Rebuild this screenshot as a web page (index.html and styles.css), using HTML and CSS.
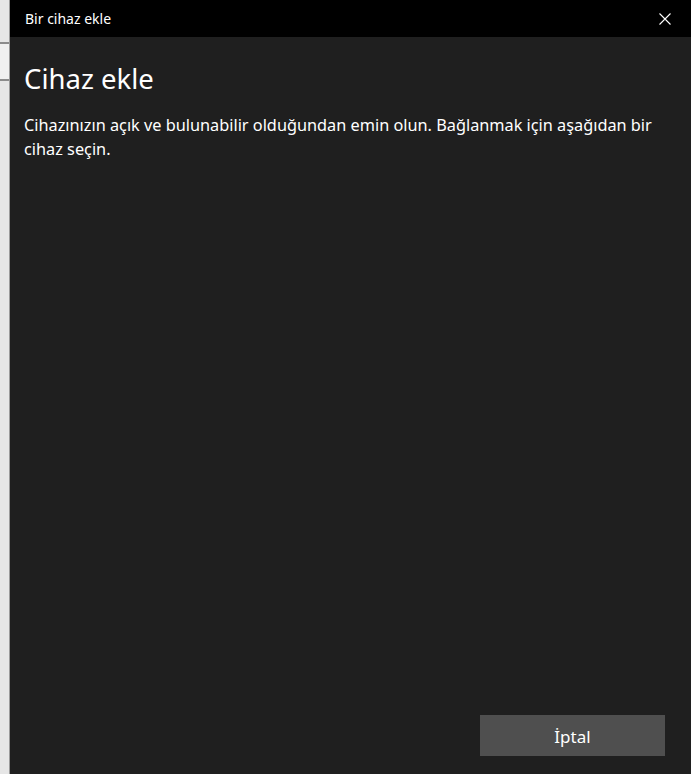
FILE: index.html
```html
<!DOCTYPE html>
<html lang="tr">
<head>
<meta charset="utf-8">
<link rel="stylesheet" href="styles.css">
</head>
<body>
<div class="screen">
  <div class="side">
    <div class="side-top"></div>
    <div class="side-line"></div>
    <div class="side-mid"></div>
    <div class="side-line"></div>
    <div class="side-rest"></div>
  </div>
  <div class="dialog">
    <div class="titlebar">
      <span class="title">Bir cihaz ekle</span>
      <span class="close">
        <svg width="12" height="12" viewBox="0 0 12 12"><path d="M0.5 0.5 L11.5 11.5 M11.5 0.5 L0.5 11.5" stroke="#fff" stroke-width="1.1" fill="none"/></svg>
      </span>
    </div>
    <div class="content">
      <h1 class="heading">Cihaz ekle</h1>
      <p class="desc">Cihazınızın açık ve bulunabilir olduğundan emin olun. Bağlanmak için aşağıdan bir cihaz seçin.</p>
      <div class="spacer"></div>
      <div class="actions">
        <button class="btn">İptal</button>
      </div>
    </div>
  </div>
</div>
</body>
</html>
```

FILE: styles.css
```css
html, body {
  margin: 0;
  padding: 0;
  height: 100%;
  background: #1f1f1f;
}
.screen {
  display: flex;
  height: 774px;
  width: 691px;
  overflow: hidden;
  font-family: "Noto Sans", "Open Sans", sans-serif;
}
.side {
  width: 9px;
  flex: none;
  display: flex;
  flex-direction: column;
  background: #e6e6e6;
  border-right: 1px solid #9a9a9a;
}
.side-top { height: 42px; background: #e6e6e6; }
.side-line { height: 2px; background: #8c8c8c; }
.side-mid { height: 35px; background: #f0f0f0; }
.side-rest { flex: 1; background: #e6e6e6; }
.dialog {
  flex: 1;
  display: flex;
  flex-direction: column;
  background: #1f1f1f;
}
.titlebar {
  height: 37px;
  background: #000;
  display: flex;
  align-items: center;
  justify-content: space-between;
  padding: 0 20px 0 15px;
}
.title {
  color: #fff;
  font-size: 14px;
}
.close {
  display: flex;
  width: 12px;
  height: 12px;
}
.content {
  flex: 1;
  display: flex;
  flex-direction: column;
  padding: 0 26px 18px 14px;
}
.heading {
  margin: 24px 0 0 0;
  font-weight: 400;
  font-size: 27.5px;
  color: #fff;
  line-height: 36px;
}
.desc {
  margin: 16px 0 0 0;
  font-size: 16.3px;
  line-height: 24px;
  color: #fff;
}
.spacer { flex: 1; }
.actions {
  display: flex;
  justify-content: flex-end;
}
.btn {
  width: 185px;
  height: 41px;
  background: #4f4f4f;
  border: none;
  color: #fff;
  font-family: inherit;
  font-size: 17px;
  padding: 2px 0 0 0;
}
```
